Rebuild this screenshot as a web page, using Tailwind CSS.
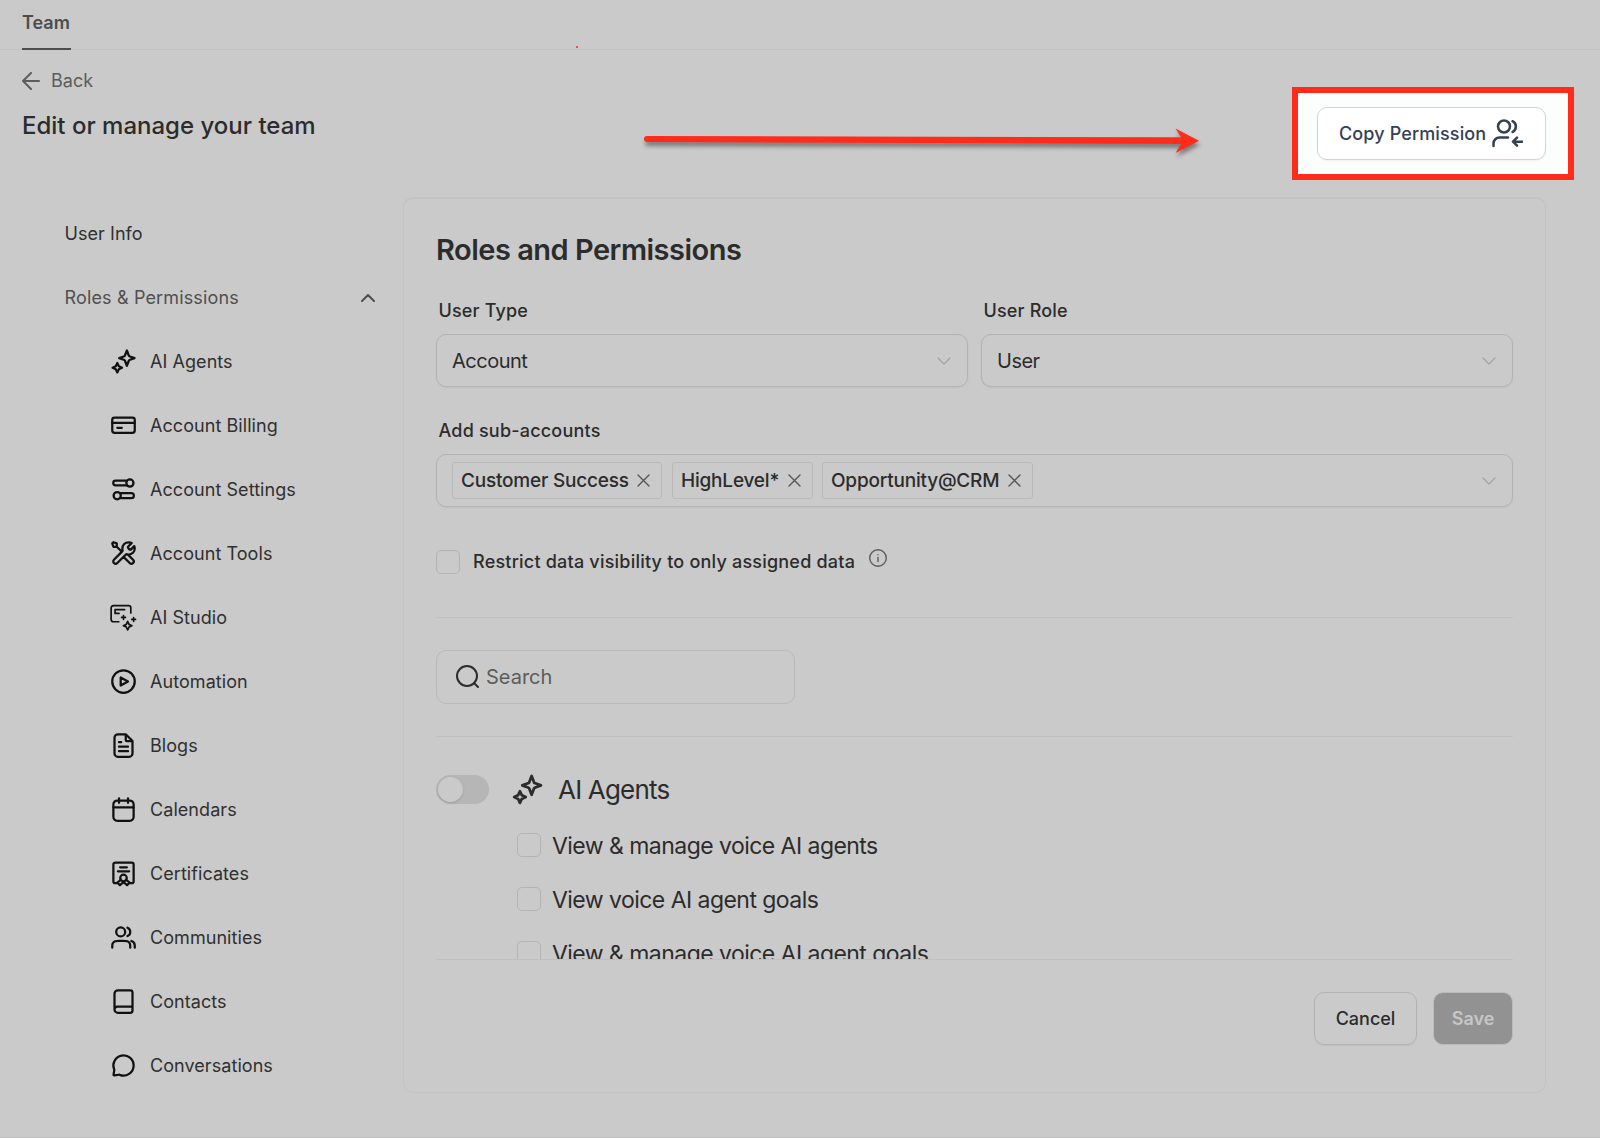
<!DOCTYPE html>
<html lang="en">

<head>
  <meta charset="UTF-8" />
  <title>Team - Roles and Permissions</title>
  <script src="https://cdn.jsdelivr.net/npm/@tailwindcss/browser@4"></script>
  <style>
    body {
      font-family: Inter, 'Liberation Sans', sans-serif;
    }

    .icon {
      fill: none;
      stroke: currentColor;
      stroke-width: 2;
      stroke-linecap: round;
      stroke-linejoin: round;
    }
  </style>
</head>

<body class="w-[1600px] h-[1138px] overflow-hidden bg-[#cacaca] text-[#2c2c2c] text-lg border-b border-[#bdbdbd]">

  <!-- Tabs -->
  <div class="h-[50px] pl-[22px] flex border-b border-[#c3c3c3]">
    <div class="h-[50px] w-[49px] border-b-2 border-[#4d4d4d] text-[#4d4d4d] font-semibold leading-[45px]">Team</div>
  </div>

  <!-- Header -->
  <header class="relative h-[147px] pl-[22px] pr-[26px] flex justify-between">
    <div class="pt-[17px]">
      <a class="flex items-center gap-[11px] h-7 text-[#5c5c5c]">
        <svg class="icon w-[18px] h-[18px]" viewBox="0 0 18 18"><path d="M17 9H1M9 1L1 9l8 8" /></svg>
        <span>Back</span>
      </a>
      <h1 class="mt-[15px] text-2xl leading-8 font-medium">Edit or manage your team</h1>
    </div>

    <div class="mt-[37px] w-[282px] h-[93px] border-[6px] border-[#ff2b1b] bg-[#fcfefd] pl-[19px] pt-[14px]">
      <button class="w-[229px] h-[53px] rounded-[10px] border border-[#d0d3de] bg-white shadow-xs pl-[21px] flex items-center gap-[6px] text-[#344054] font-medium">
        <span class="whitespace-nowrap tracking-[0.13px]">Copy Permission</span>
        <svg class="icon w-[31px] h-[29px] shrink-0" viewBox="0 0 31 29" style="stroke-width:2.5"><circle cx="12" cy="7.5" r="6" /><path d="M20.500 2.200a6 6 0 0 1 0 10.800M1.500 27v-2.500a6 6 0 0 1 6-6H16M30 22.700h-8.500M25 18.700l-4 4 4 4" /></svg>
      </button>
    </div>

    <!-- Arrow pointing at the button -->
    <svg class="absolute left-[640px] top-[70.5px] w-[570px] h-[40px] drop-shadow-[1px_4px_2px_rgba(0,0,0,0.4)]" viewBox="0 0 570 40">
      <path d="M7 15L541 16.300L535.500 7.500L559 19.700L535.500 32L541 22.900L7 21Q4 21 4 18Q4 15 7 15Z" fill="#ff2b1b" />
    </svg>
    <div class="absolute left-[575.5px] top-[-4px] w-[2px] h-[2px] rounded-full bg-[#ff2b1b]"></div>
  </header>

  <main class="flex">
    <!-- Sidebar -->
    <nav class="w-[403px] pt-[5px] text-[#303030] tracking-[0.06px]">
      <div class="h-16 pl-[64.5px] flex items-center">User Info</div>
      <div class="h-16 pl-[64.5px] pr-[28px] flex items-center justify-between text-[#505050]">
        <span class="tracking-[0.15px]">Roles &amp; Permissions</span>
        <svg class="icon mb-px w-[14px] h-[8px]" viewBox="0 0 14 8"><path d="M1 7l6-6 6 6" /></svg>
      </div>
      <div class="h-16 pl-[110px] flex items-center gap-[13px]">
        <svg class="icon mb-[2px] w-[27px] h-[27px] text-[#111]" viewBox="0 0 24 24"><path d="M15 2.200l1.800 4.700q.1.300.4.400L21.800 9l-4.600 1.700q-.3.100-.4.400L15 15.800l-1.800-4.700q-.1-.3-.4-.4L8.200 9l4.600-1.700q.3-.1.400-.4zM6.500 13.300l1.350 2.850 2.850 1.350-2.850 1.350-1.350 2.850-1.350-2.850-2.850-1.350 2.850-1.350z" /></svg>
        <span>AI Agents</span>
      </div>
      <div class="h-16 pl-[110px] flex items-center gap-[13px]">
        <svg class="icon mb-px w-[27px] h-[27px] text-[#111]" viewBox="0 0 24 24"><rect x="2" y="5" width="20" height="13.500" rx="2" /><path d="M2 9.600h20M6.500 14h4" /></svg>
        <span>Account Billing</span>
      </div>
      <div class="h-16 pl-[110px] flex items-center gap-[13px]">
        <svg class="icon mb-px w-[27px] h-[27px] text-[#111]" viewBox="0 0 24 24"><circle cx="17.700" cy="6.300" r="3.200" /><path d="M14.500 4.200H5a2.100 2.100 0 0 0 0 4.200h9.500M9.500 15.300H19a2.200 2.200 0 0 1 0 4.400H9.500" /><circle cx="6.400" cy="17.500" r="3.200" /></svg>
        <span>Account Settings</span>
      </div>
      <div class="h-16 pl-[110px] flex items-center gap-[13px]">
        <svg class="icon mb-px w-[27px] h-[27px] text-[#111]" viewBox="0 0 24 24"><path d="M6 6L10.500 10.500M6 6H3L2 3L3 2L6 3V6ZM19.259 2.741L16.631 5.369C16.235 5.765 16.037 5.963 15.963 6.191C15.898 6.392 15.898 6.608 15.963 6.809C16.037 7.037 16.235 7.235 16.631 7.631L16.869 7.869C17.265 8.265 17.463 8.463 17.691 8.537C17.892 8.602 18.108 8.602 18.309 8.537C18.537 8.463 18.735 8.265 19.131 7.869L21.589 5.411C21.854 6.055 22 6.760 22 7.500C22 10.538 19.538 13 16.500 13C16.134 13 15.776 12.964 15.430 12.896C14.944 12.800 14.700 12.752 14.553 12.767C14.396 12.782 14.319 12.806 14.180 12.880C14.050 12.950 13.919 13.081 13.657 13.343L6.500 20.500C5.672 21.328 4.328 21.328 3.500 20.500C2.672 19.672 2.672 18.328 3.500 17.500L10.657 10.343C10.919 10.081 11.050 9.950 11.120 9.819C11.194 9.681 11.218 9.603 11.233 9.447C11.248 9.299 11.200 9.056 11.104 8.570C11.036 8.224 11 7.866 11 7.500C11 4.462 13.462 2 16.500 2C17.505 2 18.448 2.270 19.259 2.741ZM12 15L17.500 20.500C18.328 21.328 19.672 21.328 20.500 20.500C21.328 19.672 21.328 18.328 20.500 17.500L15.975 12.975C15.655 12.945 15.343 12.887 15.041 12.804C14.652 12.697 14.225 12.775 13.940 13.060L12 15Z" /></svg>
        <span>Account Tools</span>
      </div>
      <div class="h-16 pl-[110px] flex items-center gap-[13px]">
        <svg class="icon mb-px w-[27px] h-[27px] text-[#111]" viewBox="0 0 24 24" style="stroke-width:1.5"><path d="M18.500 8V3.500a2 2 0 0 0-2-2H3a2 2 0 0 0-2 2v10.300a2 2 0 0 0 2 2h4.800M13 5H4.500v3.400H8M12 10.200v3.400M10.300 11.900h3.400M21 12v3.400M19.300 13.700h3.400M15.700 15.500l1.200 2.600 2.600 1.200-2.600 1.200-1.200 2.600-1.200-2.600-2.600-1.200 2.600-1.200z" /></svg>
        <span>AI Studio</span>
      </div>
      <div class="h-16 pl-[110px] flex items-center gap-[13px]">
        <svg class="icon mb-px w-[27px] h-[27px] text-[#111]" viewBox="0 0 24 24"><circle cx="12" cy="12" r="10" /><path d="M9.500 8.400v7.200L16 12z" /></svg>
        <span>Automation</span>
      </div>
      <div class="h-16 pl-[110px] flex items-center gap-[13px]">
        <svg class="icon mb-px w-[27px] h-[27px] text-[#111]" viewBox="0 0 24 24"><path d="M14 2H7a3 3 0 0 0-3 3v14a3 3 0 0 0 3 3h10a3 3 0 0 0 3-3V8zM14 2v5a1 1 0 0 0 1 1h5M16 13H8M16 17H8M10 9H8" /></svg>
        <span>Blogs</span>
      </div>
      <div class="h-16 pl-[110px] flex items-center gap-[13px]">
        <svg class="icon mb-[2px] w-[27px] h-[27px] text-[#111]" viewBox="0 0 24 24"><rect x="3" y="4" width="18" height="18" rx="3.500" /><path d="M3 10h18M8 2v4M16 2v4" /></svg>
        <span>Calendars</span>
      </div>
      <div class="h-16 pl-[110px] flex items-center gap-[13px]">
        <svg class="icon mb-px w-[27px] h-[27px] text-[#111]" viewBox="0 0 24 24"><path d="M6 20.500H4.500A1.500 1.500 0 0 1 3 19V4a1.700 1.700 0 0 1 1.700-1.700h14.600A1.700 1.700 0 0 1 21 4v15a1.500 1.500 0 0 1-1.500 1.500H18M9 6.500h6M7 10h10" /><circle cx="12" cy="16" r="2.900" /><path d="M9.600 17.700L6.500 20.200 8.800 22.300 12 19.600l3.200 2.700 2.300-2.100-3.100-2.500" /></svg>
        <span>Certificates</span>
      </div>
      <div class="h-16 pl-[110px] flex items-center gap-[13px]">
        <svg class="icon mb-px w-[27px] h-[27px] text-[#111]" viewBox="0 0 24 24"><path d="M22 21v-2a4 4 0 0 0-3-3.870M15.500 3.290a4 4 0 0 1 0 7.420M18 21c0-1.860 0-2.800-.3-3.530a4 4 0 0 0-2.170-2.170C14.800 15 13.860 15 12 15H8c-1.860 0-2.800 0-3.530.3a4 4 0 0 0-2.170 2.170C2 18.200 2 19.140 2 21" /><circle cx="9.500" cy="7" r="4" /></svg>
        <span>Communities</span>
      </div>
      <div class="h-16 pl-[110px] flex items-center gap-[13px]">
        <svg class="icon mb-px w-[27px] h-[27px] text-[#111]" viewBox="0 0 24 24"><path d="M20 16.500H6.500A2.600 2.600 0 0 0 4 19M7 22h11a2 2 0 0 0 2-2V4a2 2 0 0 0-2-2H7a3 3 0 0 0-3 3v14a3 3 0 0 0 3 3z" /></svg>
        <span>Contacts</span>
      </div>
      <div class="h-16 pl-[110px] flex items-center gap-[13px]">
        <svg class="icon mb-px w-[27px] h-[27px] text-[#111]" viewBox="0 0 24 24"><path d="M21 12a9 9 0 0 1-12.385 8.342C8.300 20.200 8.100 20.150 7.663 20.223L4.105 20.816C3.300 20.950 3.050 20.700 3.184 19.895L3.777 16.337C3.850 15.900 3.800 15.700 3.658 15.385A9 9 0 1 1 21 12z" /></svg>
        <span>Conversations</span>
      </div>
    </nav>

    <!-- Roles and permissions card -->
    <section class="w-[1143px] h-[896px] border border-[#c3c3c3] border-t-2 rounded-[10px] px-8 flex flex-col">
      <h2 class="mt-[33px] text-[29px] leading-9 font-semibold tracking-[-0.5px]">Roles and Permissions</h2>

      <div class="mt-[29px] grid grid-cols-2 gap-[13px]">
        <div>
          <label class="block pl-[2.5px] leading-[28px] font-medium tracking-[0.17px]">User Type</label>
          <div class="mt-[9px] h-[53px] rounded-[10px] border border-[#b2b2b2] shadow-xs pl-[15px] pr-4 flex items-center justify-between text-xl tracking-[-0.5px]">
            <span>Account</span>
            <svg class="icon w-[14px] h-[8px] text-[#a3a3a3]" viewBox="0 0 14 8" style="stroke-width:1.2"><path d="M1 1l6 6 6-6" /></svg>
          </div>
        </div>
        <div>
          <label class="block pl-[2.5px] leading-[28px] font-medium tracking-[0.17px]">User Role</label>
          <div class="mt-[9px] h-[53px] rounded-[10px] border border-[#b2b2b2] shadow-xs pl-[15px] pr-4 flex items-center justify-between text-xl tracking-[-0.5px]">
            <span>User</span>
            <svg class="icon w-[14px] h-[8px] text-[#a3a3a3]" viewBox="0 0 14 8" style="stroke-width:1.2"><path d="M1 1l6 6 6-6" /></svg>
          </div>
        </div>
      </div>

      <label class="mt-[30px] block pl-[2.5px] leading-[28px] font-medium tracking-[0.2px]">Add sub-accounts</label>
      <div class="mt-[9px] h-[53px] rounded-[10px] border border-[#b2b2b2] shadow-xs pl-[15px] pr-4 flex items-center justify-between">
        <div class="flex gap-[10px] text-[19px] font-medium tracking-[-0.2px]">
          <div class="w-[210px] h-[37px] border border-[#b9b9b9] rounded-[3px] pl-2 pr-[11px] flex items-center justify-between">
            <span>Customer Success</span>
            <svg class="icon w-[13px] h-[13px] text-[#555]" viewBox="0 0 13 13" style="stroke-width:1.4"><path d="M1 1l11 11M12 1L1 12" /></svg>
          </div>
          <div class="w-[141px] mr-[-1px] h-[37px] border border-[#b9b9b9] rounded-[3px] pl-2 pr-[11px] flex items-center justify-between">
            <span>HighLevel*</span>
            <svg class="icon w-[13px] h-[13px] text-[#555]" viewBox="0 0 13 13" style="stroke-width:1.4"><path d="M1 1l11 11M12 1L1 12" /></svg>
          </div>
          <div class="w-[211px] h-[37px] border border-[#b9b9b9] rounded-[3px] pl-2 pr-[11px] flex items-center justify-between">
            <span>Opportunity@CRM</span>
            <svg class="icon w-[13px] h-[13px] text-[#555]" viewBox="0 0 13 13" style="stroke-width:1.4"><path d="M1 1l11 11M12 1L1 12" /></svg>
          </div>
        </div>
        <svg class="icon w-[14px] h-[8px] text-[#a3a3a3]" viewBox="0 0 14 8" style="stroke-width:1.2"><path d="M1 1l6 6 6-6" /></svg>
      </div>

      <div class="mt-[43px] h-6 flex items-center">
        <div class="w-6 h-6 rounded-[5px] border border-[#b4b4b4]"></div>
        <span class="ml-[13px] font-medium whitespace-nowrap tracking-[0.21px]">Restrict data visibility to only assigned data</span>
        <svg class="icon ml-[14px] mb-[8px] w-[18px] h-[18px] text-[#5c5c5c]" viewBox="0 0 18 18" style="stroke-width:1.4"><circle cx="9" cy="9" r="8.300" /><path d="M9 8.500v4M9 5.700v.1" /></svg>
      </div>

      <div class="mt-[43px] border-t border-[#c0c0c0]"></div>
      <div class="mt-8 w-[359px] h-[54px] shrink-0 rounded-[10px] border border-[#b9b9b9] pl-[19px] flex items-center gap-[7px] text-xl text-[#5c5c5c]">
        <svg class="icon mb-px w-[23px] h-[23px] text-[#2c2c2c]" viewBox="0 0 23 23"><circle cx="11" cy="11" r="10" /><path d="M18.200 18.200L22 22" /></svg>
        <span>Search</span>
      </div>
      <div class="mt-8 border-t border-[#c0c0c0]"></div>

      <!-- Permission list, clipped by the footer -->
      <div class="h-[222px] shrink-0 overflow-hidden">
        <div class="mt-[37px] h-[31px] flex items-center">
          <div class="w-[53px] h-[29px] rounded-full bg-[#b6b6b6] p-[2px]">
            <div class="w-[25px] h-[25px] rounded-full bg-[#cacaca] shadow"></div>
          </div>
          <svg class="icon ml-[22px] mb-px w-[33px] h-[33px]" viewBox="0 0 24 24"><path d="M15 2.200l1.800 4.700q.1.300.4.400L21.800 9l-4.600 1.700q-.3.100-.4.400L15 15.800l-1.800-4.700q-.1-.3-.4-.4L8.200 9l4.600-1.700q.3-.1.400-.4zM6.500 13.300l1.350 2.850 2.850 1.350-2.850 1.350-1.350 2.850-1.350-2.850-2.850-1.350 2.850-1.350z" /></svg>
          <span class="ml-[14px] pt-px text-[26px] tracking-[-0.8px]">AI Agents</span>
        </div>
        <div class="mt-[13px] pl-[81px] text-[23px] tracking-[-0.54px]">
          <div class="h-[54px] flex items-center gap-[11px]">
            <div class="w-6 h-6 rounded-[5px] border border-[#b4b4b4]"></div>
            <span class="pt-[4px] whitespace-nowrap">View &amp; manage voice AI agents</span>
          </div>
          <div class="h-[54px] flex items-center gap-[11px]">
            <div class="w-6 h-6 rounded-[5px] border border-[#b4b4b4]"></div>
            <span class="pt-[4px] whitespace-nowrap">View voice AI agent goals</span>
          </div>
          <div class="h-[54px] flex items-center gap-[11px]">
            <div class="w-6 h-6 rounded-[5px] border border-[#b4b4b4]"></div>
            <span class="pt-[4px] whitespace-nowrap">View &amp; manage voice AI agent goals</span>
          </div>
        </div>
      </div>

      <div class="border-t border-[#c0c0c0] pt-8 flex justify-end gap-4 font-medium">
        <button class="w-[103px] h-[53px] rounded-[10px] border border-[#b2b2b2] shadow-xs">Cancel</button>
        <button class="w-[80px] h-[53px] rounded-[10px] border border-[#bbb] bg-[#929292] text-[#c6c6c6] font-semibold">Save</button>
      </div>
    </section>
  </main>

</body>

</html>
